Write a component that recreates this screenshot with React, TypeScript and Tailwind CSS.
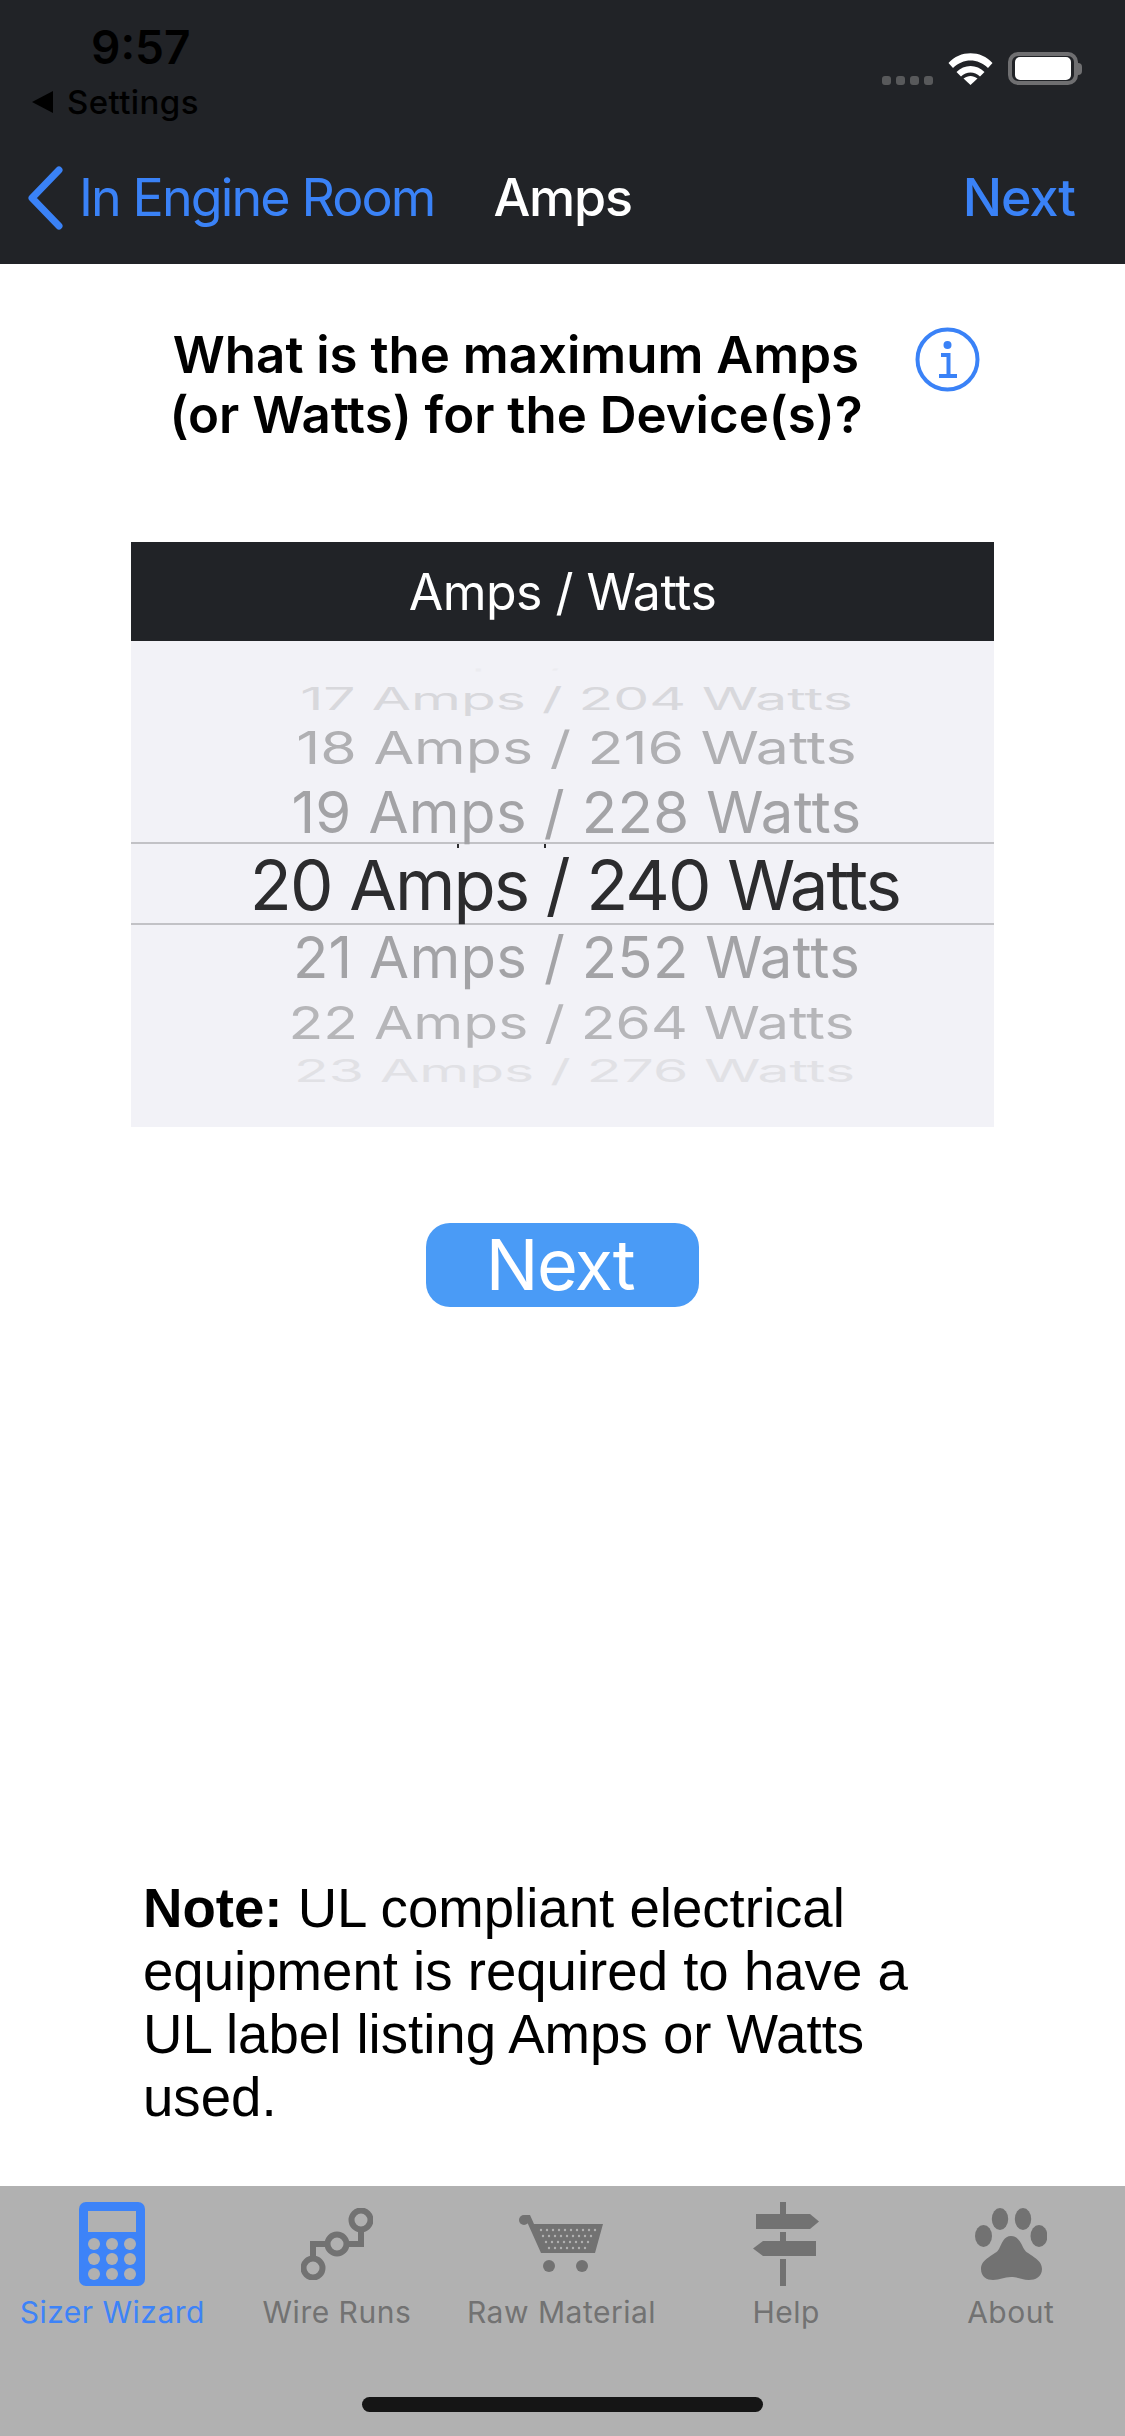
import React from "react";

const pickerTop = [
  { label: "17 Amps / 204 Watts", cls: "h-[48px] text-[57px] text-[#d8d8dc] scale-y-[0.55]" },
  { label: "18 Amps / 216 Watts", cls: "h-[50px] text-[59px] text-[#b0b0b3] scale-y-[0.77]" },
  { label: "19 Amps / 228 Watts", cls: "mt-[10px] h-[60px] pl-[28px] text-[58px] tracking-[0.4px] text-[#a3a3a6]" },
];

const pickerBottom = [
  { label: "21 Amps / 252 Watts", cls: "h-[64px] text-[58px] tracking-[0.3px] text-[#a3a3a6]" },
  { label: "22 Amps / 264 Watts", cls: "h-[66px] text-[57px] text-[#b6b6b9] scale-y-[0.8] -translate-x-[5px]" },
  { label: "23 Amps / 276 Watts", cls: "h-[30px] text-[57px] text-[#e1e1e5] scale-y-[0.55] -translate-x-[2px]" },
];

const PickerRow = ({ label, cls }: { label: string; cls: string }) => (
  <div className={`flex items-center justify-center pl-[28px] leading-none whitespace-nowrap ${cls}`}>{label}</div>
);

const WifiIcon = () => (
  <svg width="45" height="32" viewBox="0 0 45 32" fill="#fff">
    <path d="M0.5 10 C12 -3 33 -3 44.5 10 L40 15 C30 5 15 5 5 15 Z" />
    <path d="M8.5 19 C16 11 29 11 36.5 19 L32 23.5 C26.5 18 18.5 18 13 23.5 Z" />
    <path d="M22.5 32 L15.5 25.5 C20 22 25 22 29.5 25.5 Z" />
  </svg>
);

const Calculator = () => (
  <svg width="66" height="84" viewBox="0 0 66 84">
    <rect width="66" height="84" rx="7" fill="#3d83f8" />
    <rect x="9" y="9" width="48" height="21" fill="#b1b1b1" />
    {[42, 57, 72].map((y) =>
      [15, 33, 51].map((x) => <ellipse key={`${x}-${y}`} cx={x} cy={y} rx="6" ry="6" fill="#b1b1b1" />)
    )}
  </svg>
);

const WireRuns = () => (
  <svg width="72" height="72" viewBox="0 0 72 72" fill="none" stroke="#727272" strokeWidth="6">
    <circle cx="60" cy="12" r="9.5" />
    <circle cx="36" cy="36" r="9.5" />
    <circle cx="12" cy="60" r="9.5" />
    <path d="M12 50 V36 H26 M46 36 H60 V22" />
  </svg>
);

const Cart = () => (
  <svg width="84" height="58" viewBox="0 0 84 58">
    <circle cx="5" cy="5" r="5" fill="#727272" />
    <path d="M5 0 L11 0 L15 9 L84 9 L76 38 L22 38 L9 9 Z" fill="#727272" />
    <circle cx="30" cy="51" r="6" fill="#727272" />
    <circle cx="63" cy="51" r="6" fill="#727272" />
    {[
      { y: 15, from: 22, n: 10 },
      { y: 21, from: 24, n: 9 },
      { y: 27, from: 27, n: 8 },
      { y: 33, from: 30, n: 7 },
    ].map((row) =>
      Array.from({ length: row.n }).map((_, i) => (
        <circle key={`${row.y}-${i}`} cx={row.from + i * 6} cy={row.y} r="1.2" fill="#b1b1b1" />
      ))
    )}
  </svg>
);

const SignPost = () => (
  <svg width="66" height="84" viewBox="0 0 66 84" fill="#727272">
    <rect x="27" y="0" width="6" height="12" />
    <path d="M3 12 H57 L66 19.5 L57 27 H3 Z" />
    <rect x="27" y="30" width="6" height="9" />
    <path d="M63 39 H10 L0 46.5 L10 54 H63 Z" />
    <rect x="27" y="57" width="6" height="27" />
  </svg>
);

const Paw = () => (
  <svg width="72" height="72" viewBox="0 0 72 72" fill="#727272">
    <ellipse cx="8.5" cy="28" rx="8.5" ry="11" />
    <ellipse cx="25" cy="11" rx="8.2" ry="11" />
    <ellipse cx="48" cy="11" rx="8.2" ry="11" />
    <ellipse cx="64" cy="28" rx="8.5" ry="11" />
    <path d="M36 28 C43 28 46 35 49 41 C52 47 67 50 67 61 C67 69 60 72 54 72 C47 72 43 69 36 69 C29 69 25 72 18 72 C12 72 6 69 6 61 C6 50 21 47 24 41 C27 35 29 28 36 28 Z" />
  </svg>
);

const tabs = [
  { label: "Sizer Wizard", icon: <Calculator />, active: true },
  { label: "Wire Runs", icon: <WireRuns /> },
  { label: "Raw Material", icon: <Cart /> },
  { label: "Help", icon: <SignPost /> },
  { label: "About", icon: <Paw /> },
];

export default function App() {
  return (
    <div className="flex h-[2436px] w-[1125px] flex-col overflow-hidden bg-white font-['Inter',sans-serif]">
      {/* status + nav bar */}
      <header className="flex h-[264px] flex-col bg-[#212327]">
        <div className="flex h-[130px] justify-between pl-[32px] pr-[43px] pt-[23px]">
          <div className="flex flex-col">
            <span className="pl-[59px] text-[46px] font-semibold leading-[48px] text-black">9:57</span>
            <div className="mt-[11px] flex items-center gap-[14px]">
              <span className="h-0 w-0 border-y-[11px] border-r-[21px] border-y-transparent border-r-black" />
              <span className="text-[33px] font-medium leading-[40px] tracking-[0.4px] text-black">Settings</span>
            </div>
          </div>
          <div className="flex items-end gap-[15px] pb-[45px]">
            <div className="flex gap-[5px]">
              <span className="h-[9px] w-[9px] rounded-[3px] bg-[#58595b]" />
              <span className="h-[9px] w-[9px] rounded-[3px] bg-[#58595b]" />
              <span className="h-[9px] w-[9px] rounded-[3px] bg-[#58595b]" />
              <span className="h-[9px] w-[9px] rounded-[3px] bg-[#58595b]" />
            </div>
            <WifiIcon />
            <div className="flex items-center">
              <div className="flex h-[33px] w-[70px] rounded-[10px] border-[4px] border-[#6f6f71] px-[3px] py-[1px]">
                <div className="flex-1 rounded-[5px] bg-white" />
              </div>
              <div className="h-[12px] w-[4px] rounded-r-[4px] bg-[#6f6f71]" />
            </div>
          </div>
        </div>
        <div className="flex h-[134px] items-center pl-[27px] pr-[50px] pt-[2px]">
          <svg width="37" height="64" viewBox="0 0 37 64" fill="none">
            <path d="M32 4 L5 32 L32 60" stroke="#3a82f7" strokeWidth="7" strokeLinecap="round" strokeLinejoin="round" />
          </svg>
          <span className="ml-[15px] text-[52px] leading-none tracking-[-1.9px] text-[#3a82f7]">In Engine Room</span>
          <span className="ml-[59px] text-[52px] font-medium leading-none tracking-[-1.2px] text-white">Amps</span>
          <span className="ml-auto text-[52px] font-medium leading-none tracking-[-1px] text-[#3a82f7]">Next</span>
        </div>
      </header>

      <main className="flex flex-1 flex-col">
        <div className="flex items-start pl-[136px] pt-[61px]">
          <h1 className="w-[760px] text-center text-[51px] font-semibold leading-[60px] text-black">
            What is the maximum Amps
            <br />
            (or Watts) for the Device(s)?
          </h1>
          <svg className="ml-[19px] mt-[2px]" width="65" height="65" viewBox="0 0 65 65" fill="none">
            <circle cx="32.5" cy="32.5" r="30" stroke="#3a82f7" strokeWidth="4" />
            <circle cx="32.5" cy="18" r="4" fill="#3a82f7" />
            <path d="M26 28 H33.5 V48 M24 49 H42" stroke="#3a82f7" strokeWidth="4" />
          </svg>
        </div>

        {/* wheel picker */}
        <div className="ml-[131px] mt-[97px] w-[863px]">
          <div className="flex h-[99px] items-center justify-center bg-[#212327] text-[50px] leading-none tracking-[-0.5px] text-white">
            Amps / Watts
          </div>
          <div className="relative h-[486px] overflow-hidden bg-[#f2f2f7] pt-[25px]">
            <div className="flex h-[8px] items-end justify-center overflow-hidden whitespace-nowrap pl-[28px] text-[56px] leading-none text-[#ececf0] scale-y-[0.4]">
              16 Amps / 192 Watts
            </div>
            {pickerTop.map((row) => (
              <PickerRow key={row.label} {...row} />
            ))}
            <div className="flex h-[83px] items-center justify-center whitespace-nowrap border-y-2 border-[#c2c2c6] pl-[25px] pt-[4px] text-[69px] leading-none tracking-[-1.9px] text-[#2c2c2e]">
              20 Amps / 240 Watts
            </div>
            {pickerBottom.map((row) => (
              <PickerRow key={row.label} {...row} />
            ))}
            <span className="absolute left-[326px] top-[203px] h-[4px] w-[2px] bg-[#2c2c2e]" />
            <span className="absolute left-[413px] top-[203px] h-[4px] w-[2px] bg-[#2c2c2e]" />
          </div>
        </div>

        <button className="mx-auto mt-[96px] flex h-[84px] w-[273px] items-center justify-center rounded-[24px] bg-[#4a9bf6] pr-[5px] text-[70px] leading-none tracking-[-1.5px] text-white">
          Next
        </button>

        <p className="mb-[57px] ml-[143px] mt-auto w-[850px] font-['Liberation_Sans',sans-serif] text-[54.6px] leading-[63px] text-black">
          <b>Note:</b> UL compliant electrical
          <br />
          equipment is required to have a
          <br />
          UL label listing Amps or Watts
          <br />
          used.
        </p>
      </main>

      <nav className="relative h-[250px] bg-[#b1b1b1] pt-[16px]">
        <div className="grid grid-cols-5 pr-[2px]">
          {tabs.map((tab) => (
            <div key={tab.label} className="flex flex-col items-center">
              <div className="flex h-[84px] items-center justify-center">{tab.icon}</div>
              <span className={`mt-[8px] whitespace-nowrap text-[30px] leading-[36px] tracking-[0.5px] ${tab.active ? "text-[#3d83f8]" : "text-[#727272]"}`}>
                {tab.label}
              </span>
            </div>
          ))}
        </div>
        <div className="absolute bottom-[24px] left-[362px] h-[15px] w-[401px] rounded-full bg-[#151515]" />
      </nav>
    </div>
  );
}
